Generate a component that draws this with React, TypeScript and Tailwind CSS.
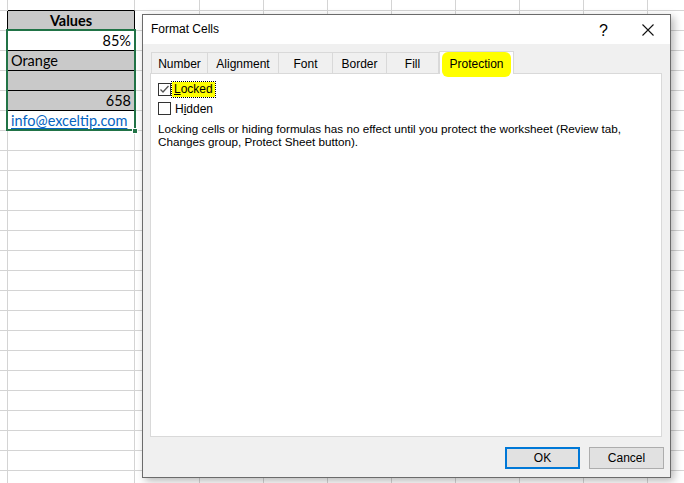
import React from "react";

const colWidths = [8, 127, 65, 64, 64, 64, 64, 64, 64, 64, 64];
const rowHeights = [11, ...Array(24).fill(20)];

type CellSpec = { text?: string; align?: "left" | "right" | "center"; bg?: string; bold?: boolean; link?: boolean };

// column B, rows 1..6
const values: Record<number, CellSpec> = {
  1: { text: "Values", align: "center", bg: "bg-[#c9c9c9]", bold: true },
  2: { text: "85%", align: "right", bg: "bg-white" },
  3: { text: "Orange", align: "left", bg: "bg-[#c9c9c9]" },
  4: { text: "", bg: "bg-[#c9c9c9]" },
  5: { text: "658", align: "right", bg: "bg-[#c9c9c9]" },
  6: { text: "info@exceltip.com", align: "left", bg: "bg-white", link: true },
};

function Sheet() {
  return (
    <div className="flex flex-col font-['Lato',sans-serif] text-[14.5px] text-black">
      {rowHeights.map((h, r) => (
        <div key={r} className="flex shrink-0" style={{ height: h }}>
          {colWidths.map((w, c) => {
            const inTable = c === 1 && r >= 1 && r <= 6;
            const v = inTable ? values[r] : undefined;
            let cls = "shrink-0 border-r border-b border-[#d4d4d4] flex items-center overflow-hidden whitespace-nowrap";
            if (c === 0 && r >= 1 && r <= 6) cls += " border-r-black";
            if (c === 1 && r === 0) cls += " border-b-black";
            if (inTable) cls += " border-r-black border-b-black " + (v?.bg ?? "");
            if (v?.align === "right") cls += " justify-end pr-[3px]";
            if (v?.align === "center") cls += " justify-center";
            if (v?.align === "left") cls += " pl-[3px]";
            return (
              <div key={c} className={cls} style={{ width: w }}>
                {v?.text ? (
                  <span className={(v.bold ? "font-bold " : "") + (v.link ? "text-[#0563c1] underline underline-offset-2" : "")}>
                    {v.text}
                  </span>
                ) : null}
              </div>
            );
          })}
        </div>
      ))}
    </div>
  );
}

function Tab({ label, w }: { label: string; w: number }) {
  return (
    <div
      className="h-[21px] mt-[2px] pt-[2px] border-t border-r border-[#d9d9d9] first:border-l flex items-center justify-center bg-[#f0f0f0]"
      style={{ width: w }}
    >
      {label}
    </div>
  );
}

export default function App() {
  return (
    <div className="relative w-[684px] h-[483px] overflow-hidden bg-white">
      <Sheet />

      {/* selection */}
      <div className="absolute left-[6px] top-[29px] w-[130px] h-[102px] border-2 border-[#217346]" />
      <div className="absolute left-[132px] top-[128px] w-[6px] h-[6px] bg-[#217346] border border-white" />

      {/* dialog */}
      <div className="absolute left-[142px] top-[14px] w-[529px] h-[464px] border border-[#6b6b6b] bg-[#f0f0f0] shadow-[3px_3px_8px_rgba(0,0,0,0.28)] flex flex-col font-['Liberation_Sans',Arial,sans-serif] text-[12px] text-black">
        <div className="h-[29px] bg-white flex items-center pl-[8px]">
          <span className="flex-1 -mt-[1px]">Format Cells</span>
          <span className="text-[16px] mr-[34px] mt-[2px]">?</span>
          <svg width="12" height="12" viewBox="0 0 12 12" className="mr-[16px]">
            <path d="M0.5 0.5 L11.5 11.5 M11.5 0.5 L0.5 11.5" stroke="#111" strokeWidth="1.1" />
          </svg>
        </div>

        <div className="flex-1 flex flex-col pl-[7px] pr-[8px]">
          <div className="flex h-[29px] items-end pl-[1px] pt-[7px]">
            <Tab label="Number" w={57} />
            <Tab label="Alignment" w={71} />
            <Tab label="Font" w={54} />
            <Tab label="Border" w={54} />
            <Tab label="Fill" w={52} />
            <div className="relative w-[75px] h-[23px] -mb-px border-t border-l border-r border-[#d9d9d9] bg-white flex items-center justify-center z-10">
              <span className="bg-[#ffff00] rounded-[6px] px-[7px] pt-[3px] pb-[4px] mt-[3px]">Protection</span>
            </div>
          </div>

          <div className="h-[364px] bg-white border border-[#d9d9d9] pl-[7px] pt-[7px] flex flex-col">
            <div className="flex items-center h-[17px]">
              <div className="w-[13px] h-[13px] border border-[#333] flex items-center justify-center">
                <svg width="11" height="11" viewBox="0 0 11 11">
                  <path d="M1.5 5.5 L4 8 L9.5 2" fill="none" stroke="#555" strokeWidth="1.3" />
                </svg>
              </div>
              <span className="ml-[1px] px-[2px] bg-[#ffff00] outline outline-1 outline-dotted outline-black leading-[15px]">
                <span className="underline">L</span>ocked
              </span>
            </div>
            <div className="flex items-center h-[17px] mt-[2px]">
              <div className="w-[13px] h-[13px] border border-[#333] bg-white" />
              <span className="ml-[4px]">
                H<span className="underline">i</span>dden
              </span>
            </div>
            <p className="mt-[5px] leading-[13px] text-[11.7px]">
              Locking cells or hiding formulas has no effect until you protect the worksheet (Review tab,
              <br />
              Changes group, Protect Sheet button).
            </p>
          </div>

          <div className="flex justify-end gap-[9px] mt-[10px] -mr-[2px]">
            <button className="w-[75px] h-[22px] border-2 border-[#0078d7] bg-[#e1e1e1]">OK</button>
            <button className="w-[75px] h-[22px] border border-[#adadad] bg-[#e1e1e1]">Cancel</button>
          </div>
        </div>
      </div>
    </div>
  );
}
